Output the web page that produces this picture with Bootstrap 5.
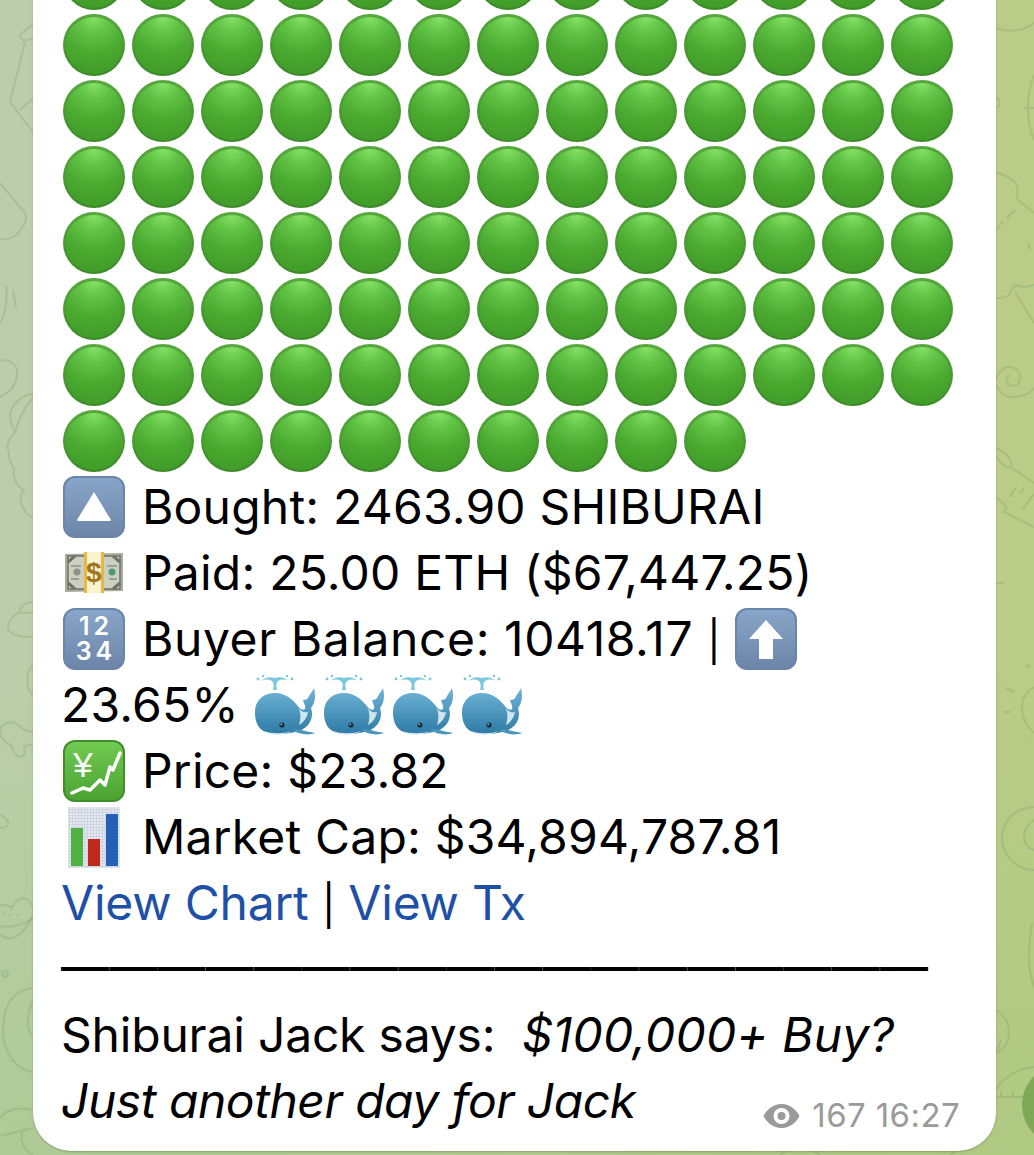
<!DOCTYPE html>
<html lang="en">
<head>
  <meta charset="UTF-8" />
  <title>Shiburai buy alert</title>
  <link href="https://cdn.jsdelivr.net/npm/bootstrap@5.3.3/dist/css/bootstrap.min.css" rel="stylesheet" />
  <style>
    html, body { height: 100%; }
    body {
      background:
        linear-gradient(180deg, rgba(190, 205, 160, 0) 55%, rgba(160, 198, 125, .45) 100%),
        linear-gradient(90deg, #bccdac 0%, #bccd9a 55%, #bbcc87 100%);
      font-family: Inter, "Liberation Sans", sans-serif;
      overflow: hidden;
      position: relative;
    }
    .doodles {
      position: absolute;
      inset: 0;
      width: 100%;
      height: 100%;
      fill: none;
      stroke: rgba(120, 150, 100, .27);
      stroke-width: 2;
    }
    .bubble {
      position: relative;
      width: 963px;
      margin: -54px 0 0 33px;
      padding: 0 0 17px 28px;
      background: #fff;
      border-radius: 0 0 38px 38px;
      box-shadow: 0 1px 2px rgba(60, 90, 40, .35);
    }
    .dot-row { display: flex; gap: 7px; height: 66px; align-items: center; margin-left: 2px; }
    .emo { width: 62px; height: 62px; flex: none; display: block; }
    .msg-line {
      display: flex;
      align-items: center;
      height: 66px;
      font-size: 48px;
      letter-spacing: .2px;
      color: #000;
      white-space: pre;
    }
    .with-icon { gap: 17px; }
    .with-icon > .emo:first-child { margin-left: 2px; }
    .pipe-mark { font-size: 40px; }
    .arrow-emo { margin-left: -3px; }
    .buyer-text { letter-spacing: .58px; }
    .whales { display: flex; gap: 7px; margin-left: 2px; }
    .msg-link { color: #1f50a8; text-decoration: none; }
    .links-line { letter-spacing: -.2px; }
    .rule-text { letter-spacing: .17px; margin-top: -2px; margin-bottom: 2px; }
    .says-line { letter-spacing: -.2px; }
    .says-line em { letter-spacing: .2px; }
    .last-line { letter-spacing: -.48px; }
    .msg-meta {
      display: flex;
      align-items: center;
      gap: 12px;
      margin: 0 36px 2px 0;
      font-size: 33px;
      line-height: 1;
      letter-spacing: .4px;
      color: #9a9a9a;
    }
    .msg-meta svg { width: 37px; height: 26px; fill: #9a9a9a; }
  </style>
</head>
<body>
  <svg class="doodles" viewBox="0 0 1034 1155">
    <path d="M33 24 C28 30 20 32 20 37 C21 41 28 41 33 38 M25 42 L10 102 L33 132 M20 110 L33 98" />
    <path d="M0 183 L24 212 C28 216 26 222 22 228 C16 238 8 240 0 239" />
    <path d="M6 286 C8 300 5 315 0 323 M13 290 L16 308" />
    <path d="M0 360 C12 360 18 365 17 376 C15 388 8 393 0 397" />
    <path d="M33 394 C20 396 10 405 10 417 C10 425 15 428 15 433 C8 438 6 448 9 452 C8 458 11 465 14 468 C12 478 18 488 24 490 C18 496 20 510 33 518 M33 398 C24 408 18 420 15 433" />
    <path d="M33 602 C26 602 20 606 20 612 C12 616 8 622 8 628 C10 636 22 637 33 637 M20 612 C24 614 28 613 33 612" />
    <path d="M33 665 C26 670 25 690 33 695" />
    <path d="M33 731 C26 733 22 728 17 724 C10 720 0 724 0 732 C0 740 8 744 12 746 C13 754 18 758 23 756 C26 754 24 748 24 746 C28 746 30 745 33 744" />
    <path d="M0 815 C6 818 9 822 8 825 C6 828 3 828 0 828" />
    <path d="M0 905 C6 905 10 906 12 908 C14 900 24 896 28 900 C32 904 33 908 33 910 M0 926 C10 928 24 925 33 918 M3 912 L4 914 M9 914 L10 916 M17 914 L18 916" />
    <path d="M33 915 C22 940 8 942 0 934" />
    <circle cx="5" cy="974" r="3" />
    <path d="M33 988 C10 990 3 1010 3 1030 C3 1055 18 1070 33 1072 M33 1000 C26 1015 26 1030 33 1036" />
    <path d="M0 1118 C10 1106 22 1108 33 1110 M0 1136 L33 1128 M24 1128 C18 1140 24 1150 33 1155" />
    <path d="M996 28 C1008 33 1024 31 1034 23 M1034 75 C1026 95 1026 120 1034 140 M1023 108 L1034 108 M996 98 C1001 100 1001 106 996 108" />
    <path d="M996 172 C1008 176 1017 182 1017 187 C1018 194 1016 198 1018 200 L1034 213 M1015 210 L1007 218 M1003 221 L996 230 M1028 243 L1030 250" />
    <path d="M996 298 C1004 298 1010 296 1010 293 C1012 290 1014 286 1015 285 C1022 288 1028 287 1034 285 M1015 292 L1034 323" />
    <path d="M996 380 C998 372 1003 367 1008 367 C1016 367 1021 372 1020 379 C1019 386 1012 388 1008 384 C1005 381 1007 376 1010 376 M996 384 C1000 394 1006 397 1013 397 C1022 397 1030 393 1034 388" />
    <path d="M996 448 C1004 452 1011 456 1012 467 C1006 470 1000 462 996 456 M1012 468 L1034 483 M996 497 L1007 507 L1004 512 L1034 527 M1010 497 L1016 487 M1020 494 L1024 488 M1022 510 L1034 494" />
    <path d="M996 583 L1004 583 M1034 687 C1024 694 1022 700 1022 707 C1022 717 1026 726 1034 733 M1006 688 L1014 692 M1004 712 L1011 712 M1026 665 L1030 667 M1026 740 L1027 742" />
    <path d="M1034 807 C1014 808 1002 822 1002 837 C1002 855 1016 870 1034 870 M1034 820 C1028 824 1024 830 1024 837 C1024 843 1028 848 1034 850" />
    <path d="M1032 923 C1030 934 1029 946 1029 957 C1029 968 1031 978 1034 987" />
    <path d="M996 1010 C1006 1016 1009 1024 1009 1033 C1009 1042 1004 1050 996 1053 M996 1053 L1001 1040" />
    <path d="M996 1090 C1002 1078 1018 1068 1034 1067 M996 1097 L1024 1097 M1001 1091 L1001 1097 M1013 1091 L1013 1097" />
    <path d="M780 1155 C790 1146 810 1146 820 1155 M950 1155 C970 1140 980 1130 990 1120" />
    <circle cx="1063" cy="1105" r="41" fill="#7fa855" stroke="none" />
  </svg>

  <svg width="0" height="0" class="position-absolute">
    <defs>
      <linearGradient id="gDotRim" x1="0" y1="0" x2="0" y2="1">
        <stop offset="0" stop-color="#58a83f" />
        <stop offset="1" stop-color="#3c8a28" />
      </linearGradient>
      <radialGradient id="gDot" cx=".5" cy="0" r="1">
        <stop offset="0" stop-color="#86e267" />
        <stop offset=".28" stop-color="#62c447" />
        <stop offset=".65" stop-color="#4aa92f" />
        <stop offset="1" stop-color="#419c29" />
      </radialGradient>
      <linearGradient id="gKey" x1="0" y1="0" x2="0" y2="1">
        <stop offset="0" stop-color="#88a6c9" />
        <stop offset="1" stop-color="#6c85a9" />
      </linearGradient>
      <linearGradient id="gYen" x1="0" y1="0" x2="0" y2="1">
        <stop offset="0" stop-color="#72cb53" />
        <stop offset="1" stop-color="#4ba232" />
      </linearGradient>
      <linearGradient id="gWhale" x1="0" y1="0" x2="0" y2="1">
        <stop offset="0" stop-color="#6eb4d6" />
        <stop offset="1" stop-color="#2f7ba6" />
      </linearGradient>
      <pattern id="pGrid" width="3" height="3" patternUnits="userSpaceOnUse">
        <rect width="3" height="3" fill="#e4e8f0" />
        <path d="M0 0H3M0 0V3" stroke="#bcc6d6" stroke-width="1" />
      </pattern>
      <symbol id="icoDot" viewBox="0 0 62 62">
        <circle cx="31" cy="31" r="31" fill="url(#gDotRim)" />
        <circle cx="31" cy="31.5" r="28.5" fill="url(#gDot)" />
      </symbol>
      <symbol id="icoUpTri" viewBox="0 0 62 62">
        <rect x="1" y="1" width="60" height="60" rx="11" fill="url(#gKey)" stroke="#6a85a8" stroke-width="2" />
        <path d="M31 16 L48 44 Q48 45 46 45 H16 Q14 45 14 44 Z" fill="#fff" />
      </symbol>
      <symbol id="icoMoney" viewBox="0 0 62 62">
        <path d="M2 12 L60 11 V49 L2 50 Z" fill="#a9ad9c" />
        <rect x="5" y="14" width="52" height="33" fill="#ccd0c0" stroke="#6d7365" stroke-width="1.5" />
        <path d="M5 20 L12 14 M5 41 L12 47 M57 20 L50 14 M57 41 L50 47" stroke="#6d7365" stroke-width="3" />
        <circle cx="14" cy="30" r="3.5" fill="#8c9184" />
        <circle cx="49" cy="30" r="3.5" fill="#4e9a78" />
        <path d="M8 24 H18 M44 24 H54 M8 37 H16 M46 37 H54" stroke="#8c9184" stroke-width="1.5" />
        <rect x="21" y="10" width="20" height="41" fill="#fbf2cf" />
        <rect x="21" y="10" width="3" height="41" fill="#e8b844" />
        <rect x="38" y="10" width="3" height="41" fill="#e8b844" />
        <text x="31" y="40" text-anchor="middle" font-family="Liberation Sans, sans-serif" font-weight="700" font-size="28" fill="#a0761e">$</text>
      </symbol>
      <symbol id="icoNums" viewBox="0 0 62 62">
        <rect x="1" y="1" width="60" height="60" rx="11" fill="url(#gKey)" stroke="#6a85a8" stroke-width="2" />
        <text x="33" y="27" text-anchor="middle" font-family="Inter, sans-serif" font-weight="600" font-size="25" letter-spacing="4" fill="#fff">12</text>
        <text x="33" y="52" text-anchor="middle" font-family="Inter, sans-serif" font-weight="600" font-size="25" letter-spacing="4" fill="#fff">34</text>
      </symbol>
      <symbol id="icoUpArrow" viewBox="0 0 62 62">
        <rect x="1" y="1" width="60" height="60" rx="11" fill="url(#gKey)" stroke="#6a85a8" stroke-width="2" />
        <path d="M31 12 L48 31 H38 V51 H24 V31 H14 Z" fill="#fff" />
      </symbol>
      <symbol id="icoWhale" viewBox="0 0 62 62">
        <path d="M19 16 C20 12 20 9 18 7 C14 5 10 5 6 8 C10 4 16 2 21 4 C26 2 32 4 36 8 C32 5 28 5 24 7 C22 9 22 12 23 16 Z" fill="#7cc8dc" />
        <circle cx="4" cy="5" r="1.4" fill="#7cc8dc" />
        <circle cx="9" cy="2" r="1.2" fill="#7cc8dc" />
        <circle cx="33" cy="2" r="1.2" fill="#7cc8dc" />
        <circle cx="38" cy="5" r="1.4" fill="#7cc8dc" />
        <path d="M1 38 C1 26 10 19 21 19 C31 19 38 25 43 31 C46 35 49 37 51 35 C52 33 50 29 49 26 C52 26 54 25 55 22 C57 19 59 16 60 14 C62 22 61 29 57 34 C59 40 58 46 54 51 C50 55 46 57 41 58 C30 61 14 61 8 56 C3 52 1 46 1 38 Z" fill="url(#gWhale)" />
        <path d="M44 33 C47 38 51 39 54 38 C53 44 49 49 45 51 C47 45 47 38 44 33 Z" fill="#cfe6ef" />
        <path d="M38 56 C44 54 48 56 51 57 L61 59 C54 62 44 60 38 56 Z" fill="#4a95bd" />
        <path d="M10 57 C18 60 30 60 38 57 C30 62 16 62 10 57 Z" fill="#d6e8ee" />
        <circle cx="28" cy="51" r="2.6" fill="#12303f" />
        <circle cx="27.2" cy="50.2" r=".7" fill="#fff" />
      </symbol>
      <symbol id="icoYen" viewBox="0 0 62 62">
        <rect x="1" y="1" width="60" height="60" rx="11" fill="url(#gYen)" stroke="#3f8f2c" stroke-width="2" />
        <text x="20" y="37" text-anchor="middle" font-family="Liberation Sans, sans-serif" font-size="35" fill="#fff">¥</text>
        <path d="M9 53 L20 48 L27 50 L37 40 L42 45 L47 27 L50 30 L57 13" fill="none" stroke="#fff" stroke-width="3.5" stroke-linejoin="round" stroke-linecap="round" />
      </symbol>
      <symbol id="icoChart" viewBox="0 0 62 62">
        <rect x="5" y="1" width="52" height="61" fill="url(#pGrid)" />
        <rect x="8" y="22" width="12" height="38" fill="#4fb044" />
        <rect x="25" y="33" width="12" height="27" fill="#c0281e" />
        <rect x="43" y="8" width="12" height="52" fill="#2560b8" />
      </symbol>
    </defs>
  </svg>

  <div class="bubble">
    <div id="dots"></div>

    <div class="msg-line with-icon"><svg class="emo"><use href="#icoUpTri" /></svg><span>Bought: 2463.90 SHIBURAI</span></div>
    <div class="msg-line with-icon"><svg class="emo"><use href="#icoMoney" /></svg><span>Paid: 25.00 ETH ($67,447.25)</span></div>
    <div class="msg-line with-icon"><svg class="emo"><use href="#icoNums" /></svg><span class="buyer-text">Buyer Balance: 10418.17 <span class="pipe-mark">|</span></span><svg class="emo arrow-emo"><use href="#icoUpArrow" /></svg></div>
    <div class="msg-line"><span>23.65% </span><div class="whales">
      <svg class="emo"><use href="#icoWhale" /></svg>
      <svg class="emo"><use href="#icoWhale" /></svg>
      <svg class="emo"><use href="#icoWhale" /></svg>
      <svg class="emo"><use href="#icoWhale" /></svg>
    </div></div>
    <div class="msg-line with-icon"><svg class="emo"><use href="#icoYen" /></svg><span>Price: $23.82</span></div>
    <div class="msg-line with-icon"><svg class="emo"><use href="#icoChart" /></svg><span>Market Cap: $34,894,787.81</span></div>
    <div class="msg-line links-line"><a class="msg-link" href="#">View Chart</a><span> <span class="pipe-mark">|</span> </span><a class="msg-link" href="#">View Tx</a></div>
    <div class="msg-line rule-text">——————————————————</div>
    <div class="msg-line says-line">Shiburai Jack says:  <em>$100,000+ Buy?</em></div>
    <div class="d-flex justify-content-between align-items-end">
      <div class="msg-line last-line"><em>Just another day for Jack</em></div>
      <div class="msg-meta">
        <svg viewBox="0 0 37 26"><path fill-rule="evenodd" d="M18.5 1 C28 1 34 8 36.5 13 C34 18 28 25 18.5 25 C9 25 3 18 .5 13 C3 8 9 1 18.5 1 Z M18.5 5 A8 8 0 1 0 18.5 21 A8 8 0 1 0 18.5 5 Z M18.5 9 A4 4 0 1 1 18.5 17 A4 4 0 1 1 18.5 9 Z" /></svg>
        <span>167 16:27</span>
      </div>
    </div>
  </div>

  <script src="https://cdn.jsdelivr.net/npm/bootstrap@5.3.3/dist/js/bootstrap.bundle.min.js"></script>
  <script>
    // 8 rows of green circles, the last one is shorter
    const counts = [13, 13, 13, 13, 13, 13, 13, 10];
    document.getElementById("dots").innerHTML = counts.map(function (n) {
      return '<div class="dot-row">' + '<svg class="emo"><use href="#icoDot" /></svg>'.repeat(n) + "</div>";
    }).join("");
  </script>
</body>
</html>
